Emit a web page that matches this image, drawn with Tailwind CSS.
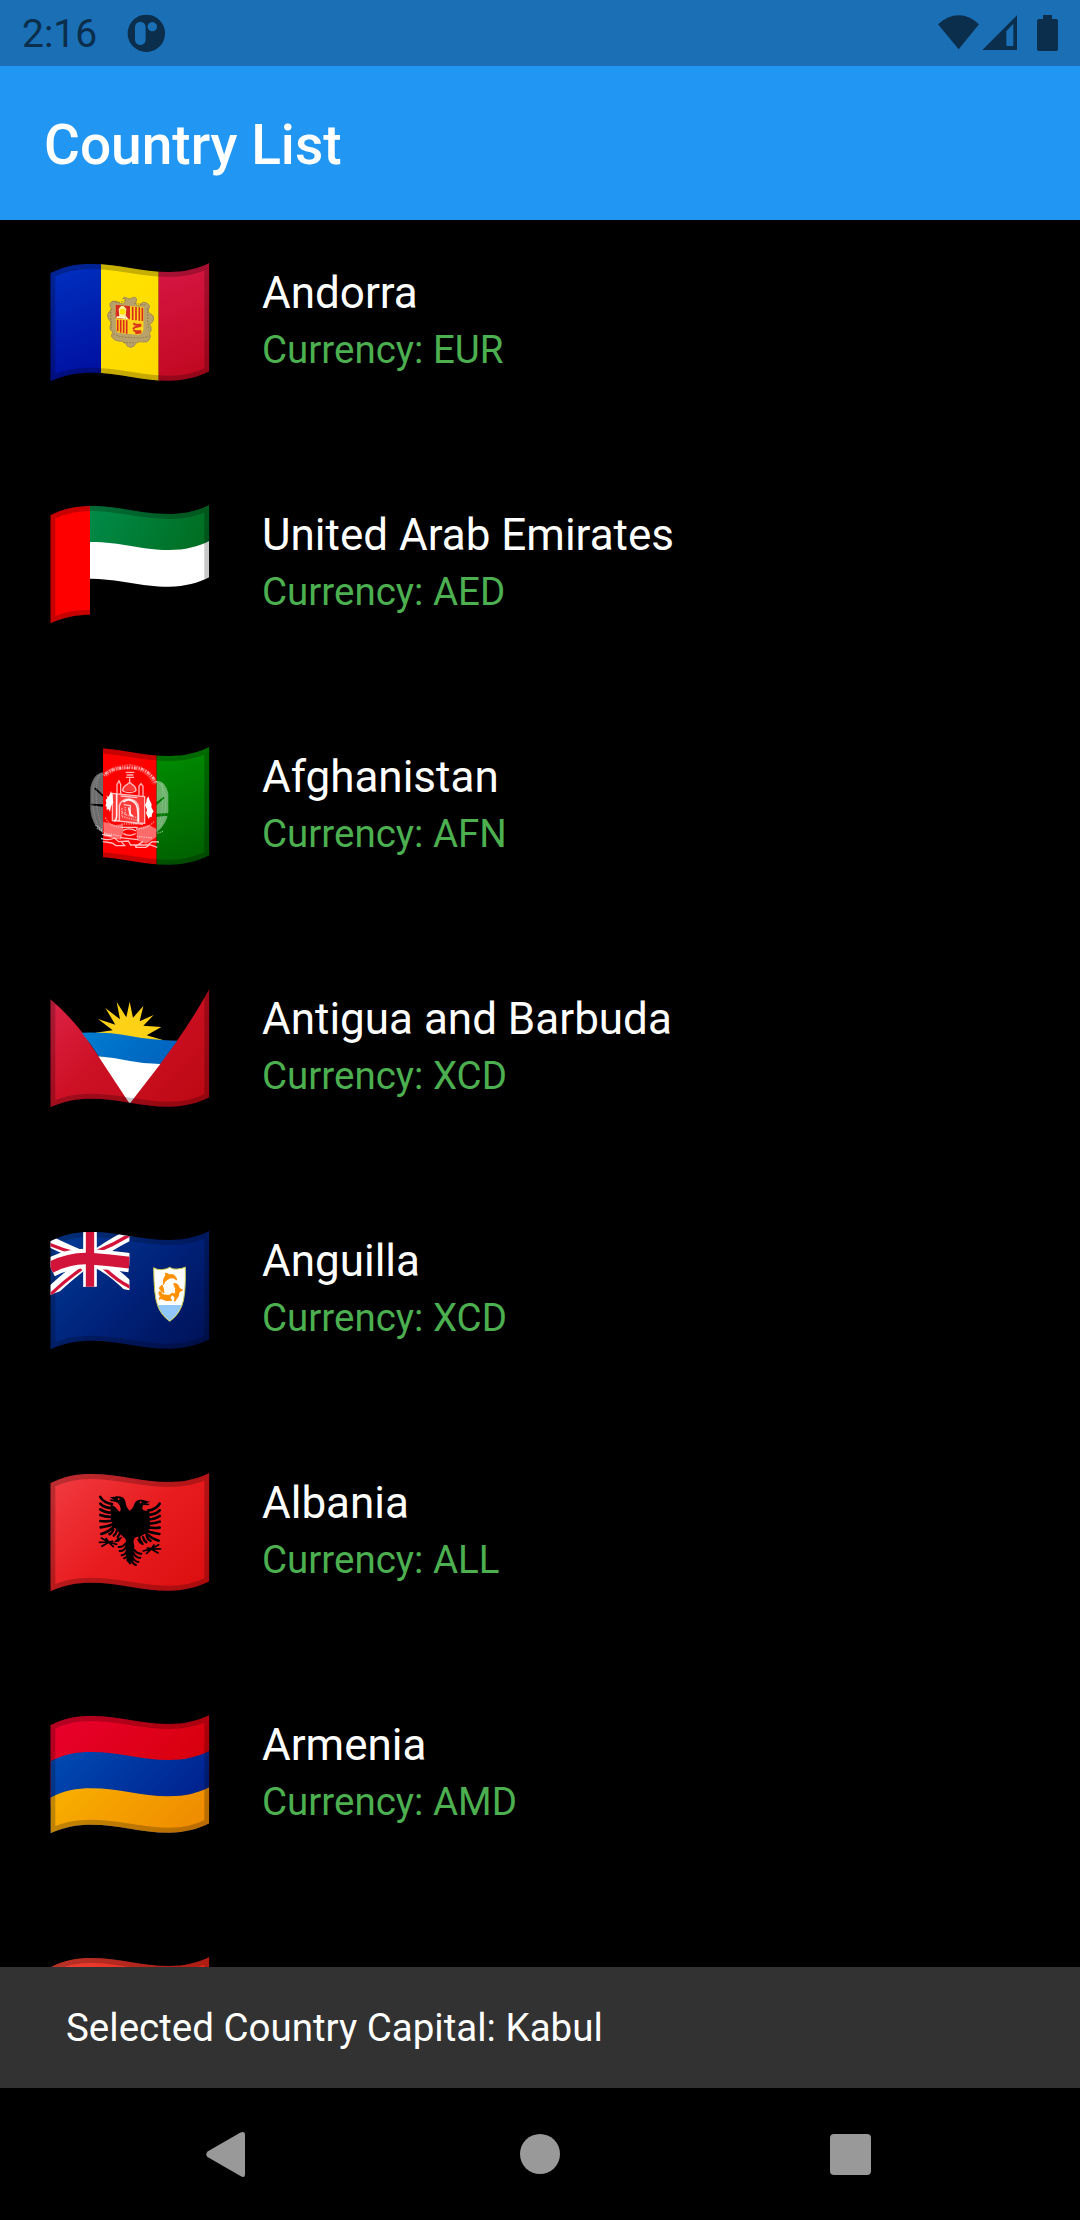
<!DOCTYPE html>
<html lang="en">
<head>
<meta charset="utf-8">
<title>Country List</title>
<script src="https://cdn.jsdelivr.net/npm/@tailwindcss/browser@4"></script>
</head>
<body class="bg-black">
<svg class="absolute" width="0" height="0" aria-hidden="true">
  <defs>
    <path id="wave" d="M61 100C100 79 140 72 183 72C270 72 330 96 417 96C465 96 505 86 538 69V394C505 411 465 422 417 422C330 422 270 398 183 398C140 398 100 405 61 424Z"/>
    <clipPath id="flag"><use href="#wave"/></clipPath>
    <clipPath id="canton"><path d="M61 100C100 79 140 72 183 72C230 72 265 79 299 85V247C265 240 230 236 183 236C140 236 100 243 61 261Z"/></clipPath>
    <linearGradient id="diag" gradientUnits="userSpaceOnUse" x1="110" y1="60" x2="490" y2="440"/>
    <linearGradient id="ad-blue" gradientUnits="userSpaceOnUse" x1="80" y1="80" x2="210" y2="400"><stop stop-color="#0030bf"/><stop offset="1" stop-color="#000f9f"/></linearGradient>
    <linearGradient id="ad-yellow" href="#diag"><stop stop-color="#ffe600"/><stop offset="1" stop-color="#ffd500"/></linearGradient>
    <linearGradient id="ad-red" gradientUnits="userSpaceOnUse" x1="400" y1="90" x2="530" y2="400"><stop stop-color="#d61643"/><stop offset="1" stop-color="#c00820"/></linearGradient>
    <linearGradient id="ae-green" gradientUnits="userSpaceOnUse" x1="190" y1="80" x2="500" y2="220"><stop stop-color="#008a47"/><stop offset="1" stop-color="#006e22"/></linearGradient>
    <linearGradient id="af-green" gradientUnits="userSpaceOnUse" x1="400" y1="90" x2="520" y2="410"><stop stop-color="#008c00"/><stop offset="1" stop-color="#005f00"/></linearGradient>
    <linearGradient id="ag-red" href="#diag"><stop stop-color="#dc2347"/><stop offset=".4" stop-color="#ce1126"/><stop offset="1" stop-color="#bd0913"/></linearGradient>
    <linearGradient id="ag-blue" href="#diag"><stop offset=".2" stop-color="#007fd2"/><stop offset=".7" stop-color="#0063be"/></linearGradient>
    <linearGradient id="ai-blue" href="#diag"><stop stop-color="#003a94"/><stop offset=".5" stop-color="#00227a"/><stop offset="1" stop-color="#001258"/></linearGradient>
    <linearGradient id="al-red" href="#diag"><stop stop-color="#f03a3f"/><stop offset=".5" stop-color="#e81c1f"/><stop offset="1" stop-color="#db0f10"/></linearGradient>
    <linearGradient id="am-red" href="#diag"><stop stop-color="#e8002c"/><stop offset=".8" stop-color="#d60008"/></linearGradient>
    <linearGradient id="am-blue" href="#diag"><stop offset=".1" stop-color="#004bb3"/><stop offset=".9" stop-color="#001f8c"/></linearGradient>
    <linearGradient id="am-orange" href="#diag"><stop offset=".2" stop-color="#fab200"/><stop offset="1" stop-color="#ee8a00"/></linearGradient>
    <linearGradient id="ao-red" href="#diag"><stop stop-color="#ec3f32"/><stop offset="1" stop-color="#d81408"/></linearGradient>
    <g id="edge" clip-path="url(#flag)"><use href="#wave" fill="none" stroke="#000" stroke-opacity=".22" stroke-width="30"/></g>
    <g id="half-eagle" fill="none" stroke="#000" stroke-width="8" stroke-linecap="round">
      <path d="M211 141Q220 158 246 162M211 161Q222 174 250 175M211 178Q225 189 252 188M211 195Q228 203 256 200M211 213Q230 216 258 210M212 232Q234 230 258 220M214 252Q236 246 254 228"/>
      <path d="M238 253Q247 249 250 238M251 257Q259 252 261 241M263 261Q270 254 272 242" stroke-width="7"/>
      <path d="M208 277L235 276L260 283M214 264L235 276M216 289L236 277M228 265L236 276L248 274M236 277L250 290" stroke-width="5"/>
      <path d="M288 279Q279 292 266 291M290 289Q282 304 269 303M292 301Q287 314 275 316M296 309Q292 322 282 325" stroke-width="6"/>
    </g>
  </defs>
</svg>

<main class="flex h-[2220px] w-[1080px] flex-col overflow-hidden bg-black font-['Roboto',sans-serif]">
  <header class="shrink-0 bg-[#2196f3]">
    <div class="flex h-[66px] items-start bg-[#1a6fb5] text-[#0a2e4b]">
      <span class="ml-[22px] mt-[11px] text-[39px] leading-[46px]">2:16</span>
      <svg class="ml-[30px] mt-[14px]" width="39" height="39" viewBox="0 0 117 117"><path fill="currentColor" fill-rule="evenodd" d="M58 2a56 56 0 1 0 .1 0ZM40 23a16 16 0 0 1 16 16v38a16 16 0 0 1-32 0V39a16 16 0 0 1 16-16ZM76 24a14 14 0 1 1-.1 0Z"/></svg>
      <svg class="ml-auto" width="180" height="66" viewBox="0 0 540 198" fill="currentColor">
        <path d="M114 73Q143 46 176 46T237 73L176 148Z"/>
        <path fill-rule="evenodd" d="M247 150L351 46V150ZM319 94V138H340V71Z"/>
        <path d="M429 45h27v12h12q6 0 6 6v84q0 6-6 6h-51q-6 0-6-6V63q0-6 6-6h12Z"/>
      </svg>
    </div>
    <div class="flex h-[154px] items-center pl-[44px] pt-1">
      <h1 class="text-[55px] font-medium leading-[64px] text-white">Country List</h1>
    </div>
  </header>

  <ul class="h-[1747px] shrink-0 overflow-hidden text-white">
    <li class="flex h-[242px]">
      <svg class="ml-[30px] mt-5 shrink-0" width="200" height="160" viewBox="0 0 600 480">
        <g clip-path="url(#flag)">
          <path fill="url(#ad-blue)" d="M0 0h213v480H0z"/><path fill="url(#ad-yellow)" d="M213 0h173v480H213z"/><path fill="url(#ad-red)" d="M386 0h214v480H386z"/>
        </g>
        <path fill="#b8a26a" stroke="#a48c55" stroke-width="3" d="M278 176q5-8 12-2q9 6 18-1q11-4 12 7q-6 13 2 17q12 3 9-5q8-10 21-2q11 7 4 17q-5 6 3 13q14 6 12 17q-2 12-12 15q7 11 4 21l-5 7q7 10-1 20q-3 7-17 6q-12-4-23 4q-3 11-14 12q-13 0-16-12q-8-8-22-7q-12-1-20-12q-2-8 4-15q-12-5-9-16q5-8 2-16q-9-6-9-18q1-12 9-13q7-5-1-13q-4-12 7-16q13-3 19 5q9 7 20-4q-2-8-1-9z"/>
        <g stroke="#8f7a48" stroke-width="3" fill="none" stroke-dasharray="5 4"><path d="M247 184q20 8 42-5M314 190l35 6M242 207l2 58M352 205l3 65M250 282q25 12 52 10q22 4 55-2M280 308h36"/></g>
        <path fill="#ffd51c" d="M257 194L341 202L340 270Q337 285 322 284L268 279Q258 276 258 266Z"/>
        <path fill="#d52b1e" d="M257 194l43 4v40l-43-3z"/>
        <path fill="#fff0a0" d="M266 207l7-9h8l8 9-2 20 9 10-21-2-17-1 10-7z"/><circle cx="278" cy="215" r="9" fill="#ffe000"/><path d="M260 231l34 5" stroke="#fff" stroke-width="4" stroke-dasharray="4 3"/>
        <path d="M308 200v40M318 201v40M328 202v40M337 203v40M263 239v35M272 239v39M281 240v39M290 241v40" stroke="#d9291b" stroke-width="5"/>
        <path d="M310 250l6 4h15v4l-17 4-5 5M310 270l6 4h15v4l-15 2" fill="none" stroke="#d9361b" stroke-width="6"/>
        <use href="#edge"/>
      </svg>
      <div class="ml-8 mt-[47px]"><h2 class="text-[44px] leading-[52px]">Andorra</h2><p class="mt-2 text-[38.5px] leading-[46px] text-[#4caf50]">Currency: EUR</p></div>
    </li>

    <li class="flex h-[242px]">
      <svg class="ml-[30px] mt-5 shrink-0" width="200" height="160" viewBox="0 0 600 480">
        <g clip-path="url(#flag)">
          <path fill="url(#ae-green)" d="M170 40H560V186H538C505 194 465 206 417 206C330 206 270 182 170 182Z"/>
          <path fill="#fff" d="M170 180C270 178 330 204 417 204C465 204 505 194 538 177V286C505 303 465 314 417 314C330 314 270 290 170 290Z"/>
          <path fill="#f00" d="M40 40h140v420H40z"/>
        </g>
        <use href="#edge"/>
      </svg>
      <div class="ml-8 mt-[47px]"><h2 class="text-[44px] leading-[52px]">United Arab Emirates</h2><p class="mt-2 text-[38.5px] leading-[46px] text-[#4caf50]">Currency: AED</p></div>
    </li>

    <li class="flex h-[242px]">
      <svg class="ml-[30px] mt-5 shrink-0" width="200" height="160" viewBox="0 0 600 480">
        <g clip-path="url(#flag)">
          <path fill="#f00" d="M219 0h161v480H219z"/><path fill="url(#af-green)" d="M380 0h220v480H380z"/>
        </g>
        <g transform="translate(0 3)" fill="none" stroke="#fff">
          <g fill="#fff" fill-opacity=".42" stroke="none">
            <path d="M219 142Q190 145 181 190V255Q185 300 219 325V245L184 241V236L219 238V215L192 191L197 188L219 209Z"/>
            <path d="M380 168Q405 165 415 205V260Q411 297 380 322V275L413 272V264L380 266V240L404 219L401 215L380 231Z"/>
          </g>
          <path stroke-opacity=".3" stroke-width="14" stroke-dasharray="5 2" d="M226 150Q248 128 299 124Q355 130 376 176"/>
          <g stroke-opacity=".3" stroke-width="3" stroke-dasharray="3 3">
            <path d="M215 148Q186 165 188 225T213 318M207 151Q197 180 199 225T218 306M388 174Q410 200 407 240T387 310M397 176Q400 220 396 255T382 300"/>
          </g>
          <path stroke-opacity=".6" stroke-width="8" stroke-dasharray="3 4 6 2 2 5" d="M222 152Q238 132 270 130T330 130Q360 140 378 172"/>
          <path fill="#fff" fill-opacity=".22" stroke="none" d="M247 205l97 10v80l-97-8zM278 198q0-14 14-20q7-10 14 0q13 8 12 20z"/>
          <path stroke-opacity=".7" stroke-width="4" d="M287 142h26M290 150h20M288 157h24M299 160v16M278 198q0-14 14-20q7-10 14 0q13 8 12 20M278 198q20 10 40 0M261 205v-27l6-10l5 10v28M327 211v-27l6-8l6 8v28M247 205l97 10v80l-97-8zM272 213l50 5M268 287v-44q4-20 30-21q28 4 28 28v42M281 239l20 3v31M254 286l85 12"/>
          <path stroke-opacity=".5" stroke-width="5" stroke-dasharray="4 3" d="M276 262l14 8 30 8M276 274l20 6 24 6M276 250v24M286 246v24"/>
          <path stroke-width="5" stroke-opacity=".9" d="M260 207v64q-1 18-9 16M280 231q18-14 34 2q12 10 10 57M296 247l4 20l9 7"/>
          <path fill="#fff" stroke="none" d="M229 211l5 5 5-7 4-11 3 10 4 25-7 11-3 17-4-9-6 3v-10l-4-2 3-9-2-9 5-5zM350 222l5-8 4 12 6 12-1 8 7 14-5 6-1 11-5-2-4 7-8-18 3-10-6-14 4-8z"/>
          <path fill="#fff" fill-opacity=".42" stroke="none" d="M220 290l35 10 23-2 2 24-8 22-50-10zM319 310l38-10 22 11v25l-30 20-28-10z"/>
          <path stroke-opacity=".75" stroke-width="4" d="M276 307h47M279 316q20-10 39 2M280 326q18 10 37 0M213 340q20 8 41-1l12 11 29-2 7 12h51l13-10 21 1M218 350l28 4 12 8h26l-11-13M315 365l24-15M316 367h32l11-8 23 8M216 328l29 5M271 338l52 6"/>
          <path stroke-opacity=".5" stroke-width="4" stroke-dasharray="4 3" d="M226 278q15 30 53 28M372 290q-20 22-54 22M274 297h50M222 324l50 9M320 334l48 5M200 310l20 10M382 325l18 -6M196 300l22 14"/>
        </g>
        <use href="#edge"/>
      </svg>
      <div class="ml-8 mt-[47px]"><h2 class="text-[44px] leading-[52px]">Afghanistan</h2><p class="mt-2 text-[38.5px] leading-[46px] text-[#4caf50]">Currency: AFN</p></div>
    </li>

    <li class="flex h-[242px]">
      <svg class="ml-[30px] mt-5 shrink-0" width="200" height="160" viewBox="0 0 600 480">
        <g clip-path="url(#flag)">
          <g transform="translate(0 -3)">
            <path fill="url(#ag-red)" d="M40 86L61 103Q110 143 160 206L300 414L442 226Q495 150 538 72L560 40V460H40Z"/>
            <path fill="#fcd116" d="M197 203L248 196L204 162L256 179L226 129L270 163L260 111L289 157L299 110L309 158L340 123L329 169L371 150L340 182L394 186L350 211L401 226L300 230Z"/>
            <path fill="url(#ag-blue)" d="M155 203Q240 201 300 213Q370 226 442 227L390 298Q340 297 300 290Q250 279 206 274Q182 235 155 203Z"/>
            <path fill="#fff" d="M205 274Q250 277 300 288Q345 297 391 297L299 416Z"/>
          </g>
        </g>
        <use href="#edge"/>
      </svg>
      <div class="ml-8 mt-[47px]"><h2 class="text-[44px] leading-[52px]">Antigua and Barbuda</h2><p class="mt-2 text-[38.5px] leading-[46px] text-[#4caf50]">Currency: XCD</p></div>
    </li>

    <li class="flex h-[242px]">
      <svg class="ml-[30px] mt-5 shrink-0" width="200" height="160" viewBox="0 0 600 480">
        <g clip-path="url(#flag)">
          <path fill="url(#ai-blue)" d="M40 40h520v420H40z"/>
          <use href="#wave" fill="none" stroke="#000" stroke-opacity=".2" stroke-width="30"/>
        </g>
        <g clip-path="url(#canton)">
          <path d="M50 96Q120 130 180 154T305 244M50 264Q115 202 180 154T305 78" fill="none" stroke="#fff" stroke-width="33"/>
          <path d="M50 105Q95 125 140 136M60 261Q100 222 154 183M202 130Q255 108 307 76M220 178Q260 218 305 240" fill="none" stroke="#d2143a" stroke-width="10"/>
          <path d="M61 179Q120 148 180 152T299 164" fill="none" stroke="#fff" stroke-width="58"/>
          <path d="M180 60v190" stroke="#fff" stroke-width="41"/>
          <path d="M61 179Q120 148 180 152T299 164" fill="none" stroke="#d2143a" stroke-width="35"/>
          <path d="M180 60v190" stroke="#d2143a" stroke-width="25"/>
        </g>
        <g transform="translate(0 6)">
          <path fill="#fff" d="M371 173q10 7 23 6q17-1 25-7q9 7 23 5q16-1 24-6q2 87-11 118q-13 30-36 45q-27-19-37-51q-10-25-11-110z"/>
          <path fill="#91c7fa" d="M381 285h74q-10 28-36 48q-28-19-38-48z"/>
          <path fill="none" stroke="#c8c746" stroke-width="3" d="M371 173q10 7 23 6q17-1 25-7q9 7 23 5q16-1 24-6q2 87-11 118q-13 30-36 45q-27-19-37-51q-10-25-11-110z"/>
          <path fill="#ff9100" stroke="#ff9100" stroke-width="3" stroke-linejoin="round" d="M400 224q-2-18 8-29l-2-6 13 5q17-3 21 16l-9-6q-12-3-19 5q-9 3-12 15zM387 245l6 1q2 9 10 9l15 1 10-7-8 15 5 7q-18 4-30-5l-8 2 4-9q-6-6-4-14zM431 221q14-2 17 14l10 5-10 5q-1 15-14 29l1-13-12-9 13-1q4-15-5-30zM396 225l-8 9 5 8 9 7-2-13z"/>
        </g>
      </svg>
      <div class="ml-8 mt-[47px]"><h2 class="text-[44px] leading-[52px]">Anguilla</h2><p class="mt-2 text-[38.5px] leading-[46px] text-[#4caf50]">Currency: XCD</p></div>
    </li>

    <li class="flex h-[242px]">
      <svg class="ml-[30px] mt-5 shrink-0" width="200" height="160" viewBox="0 0 600 480">
        <g clip-path="url(#flag)"><path fill="url(#al-red)" d="M40 40h520v420H40z"/></g>
        <use href="#half-eagle"/>
        <g transform="matrix(-1 0 0 1 600 20)"><use href="#half-eagle"/></g>
        <path d="M243 154L239 148L252 149L239 141Q254 142 260 139Q283 136 287 158Q288 173 300 182Q310 173 312 166Q316 146 340 150Q348 154 361 155L347 160L360 162L354 166L340 165Q334 175 340 180Q348 184 358 182L360 235L347 250L330 260L318 261Q306 268 313 286L310 320L300 341L289 325L286 286Q292 266 280 261L255 234L243 210L242 163Q257 170 264 181L270 186Q276 172 264 159Q254 153 243 154Z"/>
        <path d="M278 260l-12 15-14 2 10-12zM320 266l8 14 14 6-10-16zM300 318l12 12-12 14-12-14z"/>
        <circle cx="266" cy="147" r="3" fill="#e42024"/><circle cx="332" cy="157" r="3" fill="#e42024"/>
        <use href="#edge"/>
      </svg>
      <div class="ml-8 mt-[47px]"><h2 class="text-[44px] leading-[52px]">Albania</h2><p class="mt-2 text-[38.5px] leading-[46px] text-[#4caf50]">Currency: ALL</p></div>
    </li>

    <li class="flex h-[242px]">
      <svg class="ml-[30px] mt-5 shrink-0" width="200" height="160" viewBox="0 0 600 480">
        <g clip-path="url(#flag)">
          <path fill="url(#am-red)" d="M40 40h520v300H40z"/>
          <path fill="url(#am-blue)" d="M61 208C100 187 140 180 183 180C270 180 330 204 417 204C465 204 505 194 538 177V440H61Z"/>
          <path fill="url(#am-orange)" d="M61 317C100 296 140 289 183 289C270 289 330 313 417 313C465 313 505 303 538 286V440H61Z"/>
        </g>
        <use href="#edge"/>
      </svg>
      <div class="ml-8 mt-[47px]"><h2 class="text-[44px] leading-[52px]">Armenia</h2><p class="mt-2 text-[38.5px] leading-[46px] text-[#4caf50]">Currency: AMD</p></div>
    </li>

    <li class="flex h-[242px]">
      <svg class="ml-[30px] mt-5 shrink-0" width="200" height="160" viewBox="0 0 600 480">
        <g clip-path="url(#flag)"><path fill="url(#ao-red)" d="M40 40h520v420H40z"/></g>
        <use href="#edge"/>
      </svg>
    </li>
  </ul>

  <div class="flex h-[121px] shrink-0 items-center bg-[#323232] pl-[66px] text-[38.5px] leading-[46px] text-white">Selected Country Capital: Kabul</div>

  <nav class="flex h-[132px] shrink-0 items-center justify-between px-[200px] text-[#999]">
    <svg width="60" height="60" viewBox="0 0 60 60" fill="currentColor"><path d="M7.500 27.500L40.500 8.500Q45 6.500 45 11V50Q45 54.500 40.500 52L7.500 33Q5 30.500 7.500 27.500Z"/></svg>
    <svg width="60" height="60" viewBox="0 0 60 60" fill="currentColor"><circle cx="30" cy="30" r="20"/></svg>
    <svg width="60" height="60" viewBox="0 0 60 60" fill="currentColor"><rect x="10" y="10" width="41" height="41" rx="4"/></svg>
  </nav>
</main>
</body>
</html>
